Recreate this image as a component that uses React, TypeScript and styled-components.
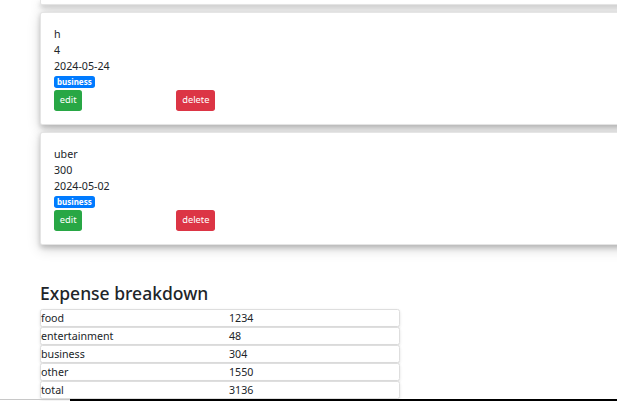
import * as React from "react";
import styled, { createGlobalStyle } from "styled-components";

interface IExpense {
  name: string;
  amount: number;
  date: string;
  category: string;
}

const expenses: IExpense[] = [
  { name: "h", amount: 4, date: "2024-05-24", category: "business" },
  { name: "uber", amount: 300, date: "2024-05-02", category: "business" }
];

const breakdown: [string, number][] = [
  ["food", 1234],
  ["entertainment", 48],
  ["business", 304],
  ["other", 1550],
  ["total", 3136]
];

const GlobalStyle = createGlobalStyle`
  html, body {
    margin: 0;
    padding: 0;
    background: #fff;
    overflow: hidden;
  }
  body {
    font-family: "Segoe UI", "Noto Sans", "Liberation Sans", sans-serif;
    font-size: 10.67px;
    line-height: 16px;
    color: #212529;
  }
`;

const Page = styled.div`
  width: 617px;
  height: 401px;
  overflow: hidden;
  position: relative;
`;

const CardList = styled.div`
  display: flex;
  flex-direction: column;
  gap: 7px;
  padding-left: 40px;
`;

const cardShadow = `0 2.7px 5.3px 0 rgba(0, 0, 0, 0.18),
  0 4px 13px 0 rgba(0, 0, 0, 0.17)`;

// bottom of the card scrolled off above the window
const CardTail = styled.div`
  width: 640px;
  height: 5px;
  box-sizing: border-box;
  background: #fff;
  border: 1px solid rgba(0, 0, 0, 0.1);
  border-top: none;
  border-radius: 0 0 2.5px 2.5px;
  box-shadow: ${cardShadow};
`;

const Card = styled.div`
  width: 640px;
  box-sizing: border-box;
  background: #fff;
  border: 1px solid rgba(0, 0, 0, 0.1);
  border-radius: 2.5px;
  padding: 13px;
  box-shadow: ${cardShadow};
`;

const Line = styled.div`
  height: 16px;
`;

const BadgeLine = styled.div`
  height: 16px;
  display: flex;
  align-items: center;
`;

const Badge = styled.span`
  display: inline-block;
  background: #007bff;
  color: #fff;
  font-size: 8px;
  font-weight: 700;
  line-height: 1;
  padding: 2px 3px;
  border-radius: 2.7px;
`;

const Actions = styled.div`
  display: flex;
  gap: 94px;
`;

const Button = styled.button<{ $variant: "success" | "danger" }>`
  font-family: inherit;
  font-size: 9.33px;
  line-height: 14px;
  padding: 3px 5.8px 4px;
  border: none;
  border-radius: 2.7px;
  color: #fff;
  background: ${p => (p.$variant === "success" ? "#28a745" : "#dc3545")};
  height: 21px;
`;

const Heading = styled.h3`
  margin: 37px 0 5px 40px;
  font-size: 17.5px;
  font-weight: 500;
  line-height: 22.4px;
`;

const Breakdown = styled.div`
  margin-left: 40px;
  width: 360px;
  display: flex;
  flex-direction: column;
`;

const Row = styled.div`
  display: grid;
  grid-template-columns: 188px 1fr;
  height: 16px;
  border: 1px solid #dedede;
  border-radius: 2.5px;
  box-shadow: 0 1px 3px rgba(0, 0, 0, 0.12);
  background: #fff;
`;

const BottomEdge = styled.div`
  position: absolute;
  left: 0;
  right: 0;
  bottom: 0;
  height: 2px;
  display: grid;
  grid-template-columns: 70px 1fr;
`;

const EdgeGray = styled.div`
  border-top: 1px solid #c8c8c8;
`;

const EdgeBlack = styled.div`
  background: #000;
`;

const ExpenseCard = ({ expense }: { expense: IExpense }) => (
  <Card>
    <Line>{expense.name}</Line>
    <Line>{expense.amount}</Line>
    <Line>{expense.date}</Line>
    <BadgeLine>
      <Badge>{expense.category}</Badge>
    </BadgeLine>
    <Actions>
      <Button $variant="success">edit</Button>
      <Button $variant="danger">delete</Button>
    </Actions>
  </Card>
);

export default function App() {
  return (
    <Page>
      <GlobalStyle />
      <CardList>
        <CardTail />
        {expenses.map(e => (
          <ExpenseCard key={e.name} expense={e} />
        ))}
      </CardList>
      <Heading>Expense breakdown</Heading>
      <Breakdown>
        {breakdown.map(([label, value]) => (
          <Row key={label}>
            <span>{label}</span>
            <span>{value}</span>
          </Row>
        ))}
      </Breakdown>
      <BottomEdge>
        <EdgeGray />
        <EdgeBlack />
      </BottomEdge>
    </Page>
  );
}
